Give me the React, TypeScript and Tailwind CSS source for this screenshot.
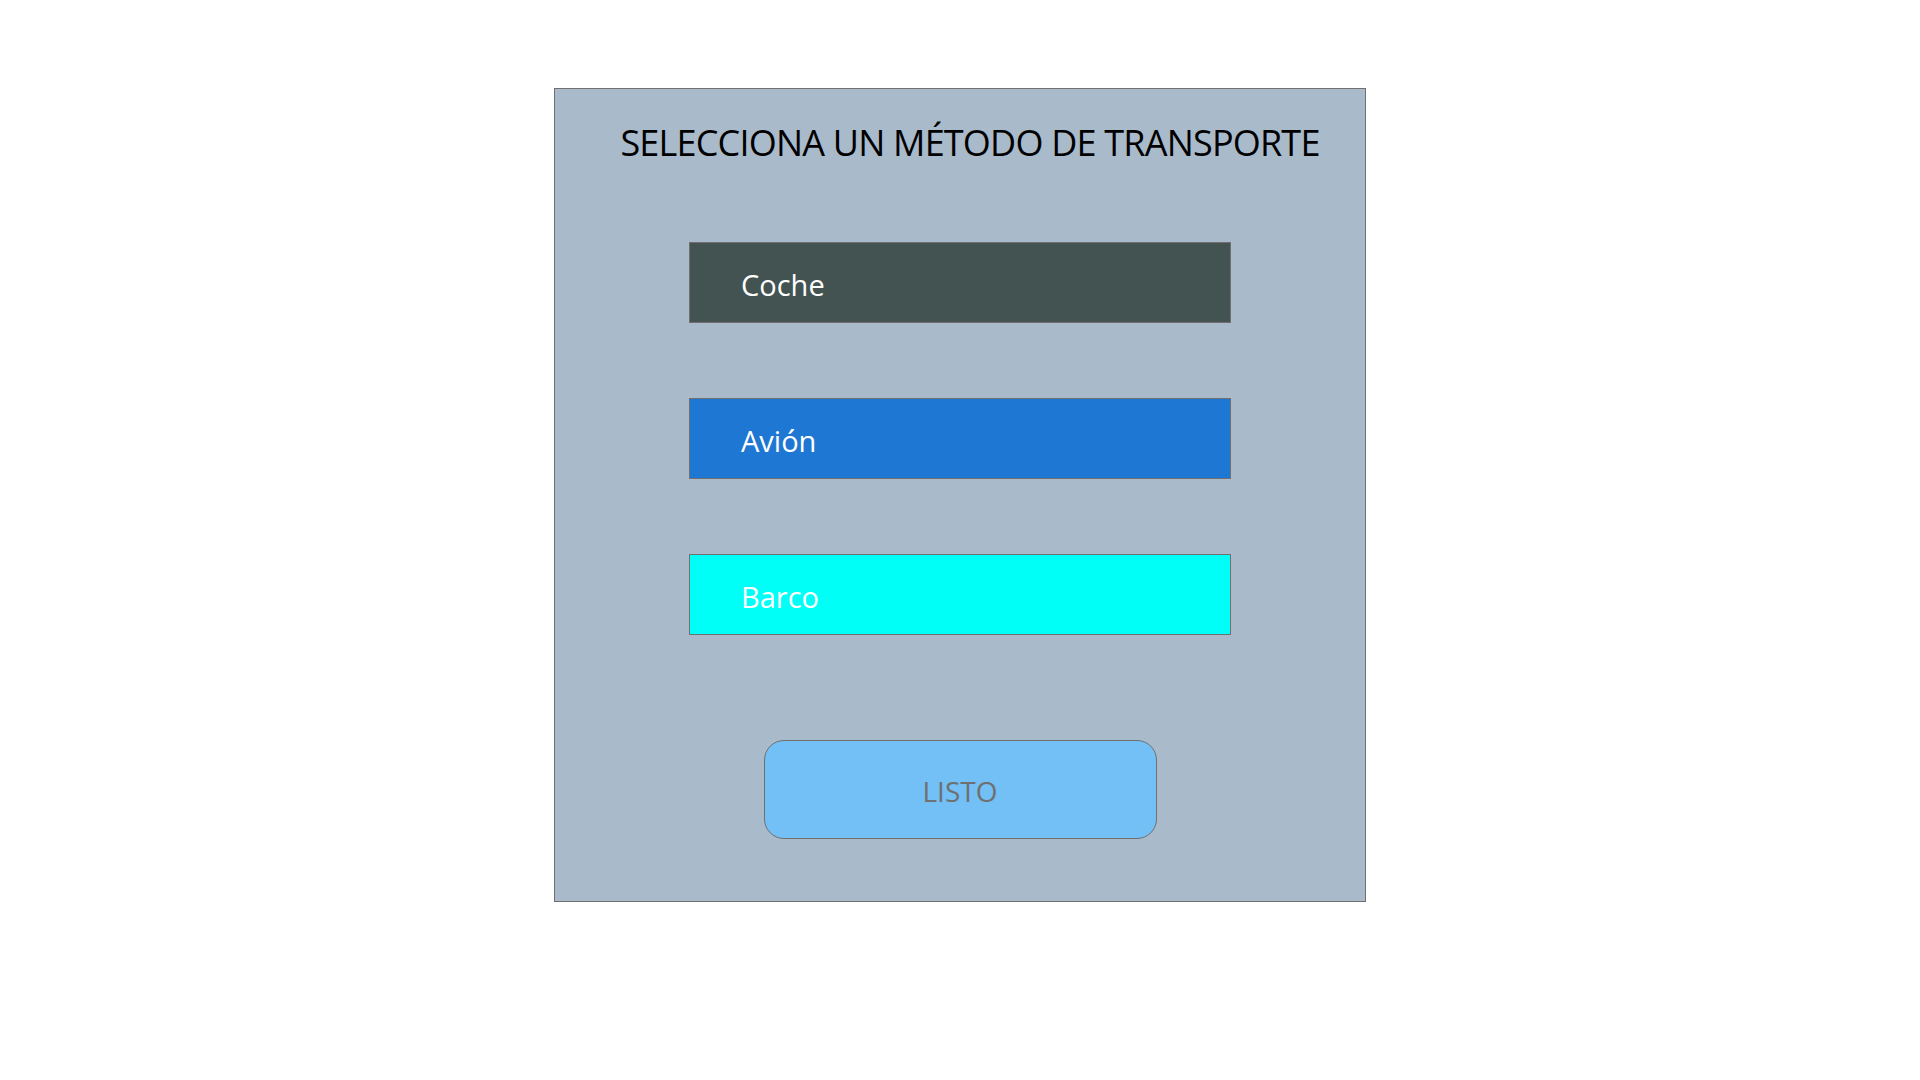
export default function App() {
  const options = [
    { label: "Coche", bg: "bg-[#435351]" },
    { label: "Avión", bg: "bg-[#1f77d4]" },
    { label: "Barco", bg: "bg-[#00fff6]" },
  ];

  return (
    <div className="min-h-screen bg-white pt-[88px] font-['Open_Sans',sans-serif]">
      <div className="mx-auto flex h-[814px] w-[812px] flex-col items-center border border-[#707070] bg-[#a9bacb]">
        <h1 className="mt-[36px] pl-[20px] text-[36px] leading-none font-normal tracking-[-0.8px] text-black">
          SELECCIONA UN MÉTODO DE TRANSPORTE
        </h1>

        <div className="mt-[81px] flex flex-col gap-[75px]">
          {options.map((o) => (
            <button
              key={o.label}
              className={`flex h-[81px] w-[542px] items-center border border-[#707070] pt-[4px] pl-[51px] text-[29px] text-white ${o.bg}`}
            >
              {o.label}
            </button>
          ))}
        </div>

        <button className="mt-[105px] flex h-[99px] w-[393px] items-center justify-center rounded-[20px] border border-[#707070] bg-[#72c0f5] pt-[2px] text-[28px] text-[#707070]">
          LISTO
        </button>
      </div>
    </div>
  );
}
